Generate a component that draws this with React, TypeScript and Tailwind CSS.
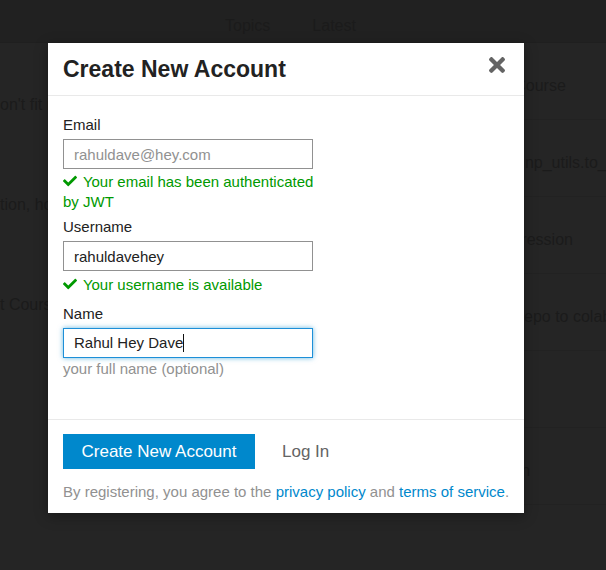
import React from "react";

const font = { fontFamily: '"Liberation Sans", Arial, sans-serif' };

function CheckIcon() {
  return (
    <svg viewBox="0 0 512 512" className="inline-block align-[-1px] mr-[2px] w-[14px] h-[14px] shrink-0 fill-[#009900]">
      <path d="M173.898 439.404l-166.4-166.4c-9.997-9.997-9.997-26.206 0-36.204l36.203-36.204c9.997-9.998 26.207-9.998 36.204 0L192 312.69 432.095 72.596c9.997-9.997 26.207-9.997 36.204 0l36.203 36.204c9.997 9.997 9.997 26.206 0 36.204l-294.4 294.401c-9.998 9.997-26.207 9.997-36.204-.001z" />
    </svg>
  );
}

function CloseIcon() {
  return (
    <svg viewBox="0 80 352 352" className="w-[16px] h-[16px] fill-[#646464]">
      <path d="M242.72 256l100.07-100.07c12.28-12.28 12.28-32.19 0-44.48l-22.24-22.24c-12.28-12.28-32.19-12.28-44.48 0L176 189.28 75.93 89.21c-12.28-12.28-32.19-12.28-44.48 0L9.21 111.45c-12.28 12.28-12.28 32.19 0 44.48L109.28 256 9.21 356.07c-12.28 12.28-12.28 32.19 0 44.48l22.24 22.24c12.28 12.28 32.2 12.28 44.48 0L176 322.72l100.07 100.07c12.28 12.28 32.2 12.28 44.48 0l22.24-22.24c12.28-12.28 12.28-32.19 0-44.48L242.72 256z" />
    </svg>
  );
}

// topic titles behind the overlay, mostly hidden by the modal
const leftRows = ["on't fit in memory", "tion, how to", "t Course"];
const rightRows = ["ng Course", "utils.np_utils.to_categorical", "Regression", "the repo to colab", "", "lation"];

function Background() {
  return (
    <div className="h-[570px] bg-[#252525] text-[#1b1b1b] text-[16px]">
      {/* top nav */}
      <div className="h-[43px] bg-[#212121] border-b border-[#1f1f1f] flex items-center pt-[10px] pl-[225px] gap-[42px]">
        <span>Topics</span>
        <span>Latest</span>
      </div>
      <div className="flex">
        <div className="w-[60px] shrink-0 overflow-hidden whitespace-nowrap flex flex-col pt-[52px] gap-[80px]">
          {leftRows.map((t) => (
            <div key={t} className="h-[20px] leading-[20px]">{t}</div>
          ))}
        </div>
        <div className="flex-1 min-w-0 flex flex-col">
          {rightRows.map((t, i) => (
            <div key={i} className="h-[77px] border-b border-[#222] pt-[33px] pl-[432px] leading-[20px] whitespace-nowrap overflow-hidden">
              {t}
            </div>
          ))}
        </div>
      </div>
    </div>
  );
}

export default function App() {
  return (
    <div className="relative w-[606px] h-[570px] overflow-hidden" style={font}>
      <Background />

      {/* modal */}
      <div className="absolute left-[48px] top-[43px] w-[476px] h-[470px] bg-white flex flex-col shadow-[0_3px_12px_rgba(0,0,0,0.35)]">
        <div className="h-[53px] shrink-0 border-b border-[#e9e9e9] flex items-center justify-between pl-[15px] pr-[19px]">
          <h3 className="text-[23px] font-bold text-[#222] leading-none">Create New Account</h3>
          <div className="-mt-[9px]">
            <CloseIcon />
          </div>
        </div>

        <div className="flex-1 px-[15px] pt-[19px] text-[15px] leading-[20px] text-[#222]">
          <label className="block">Email</label>
          <input
            readOnly
            value="rahuldave@hey.com"
            className="mt-[4px] block w-[250px] h-[30px] border border-[#919191] px-[10px] text-[15px] text-[#919191] outline-none"
          />
          <div className="mt-[3px] w-[260px] text-[#009900]">
            <CheckIcon /> Your email has been authenticated by JWT
          </div>

          <label className="block mt-[5px]">Username</label>
          <input
            readOnly
            value="rahuldavehey"
            className="mt-[4px] block w-[250px] h-[30px] border border-[#919191] px-[10px] text-[15px] text-[#222] outline-none"
          />
          <div className="mt-[4px] text-[#009900]">
            <CheckIcon /> Your username is available
          </div>

          <label className="block mt-[9px]">Name</label>
          <div className="mt-[4px] w-[250px] h-[30px] border border-[#1d8fd8] shadow-[0_0_5px_rgba(0,136,204,0.6)] px-[10px] flex items-center text-[15px] text-[#222]">
            <span>Rahul Hey Dave</span>
            <span className="w-px h-[18px] bg-[#111]" />
          </div>
          <div className="mt-[2px] text-[15px] leading-[18px] text-[#919191]">your full name (optional)</div>
        </div>

        <div className="h-[94px] shrink-0 border-t border-[#e9e9e9] px-[15px] pt-[14px]">
          <div className="flex items-center">
            <button className="h-[35px] w-[192px] bg-[#0088cc] text-white text-[17px]">Create New Account</button>
            <span className="ml-[27px] text-[17px] text-[#646464]">Log In</span>
          </div>
          <p className="mt-[14px] text-[15px] leading-[18px] text-[#919191] whitespace-nowrap">
            By registering, you agree to the <span className="text-[#0088cc]">privacy policy</span> and{" "}
            <span className="text-[#0088cc]">terms of service</span>.
          </p>
        </div>
      </div>
    </div>
  );
}
